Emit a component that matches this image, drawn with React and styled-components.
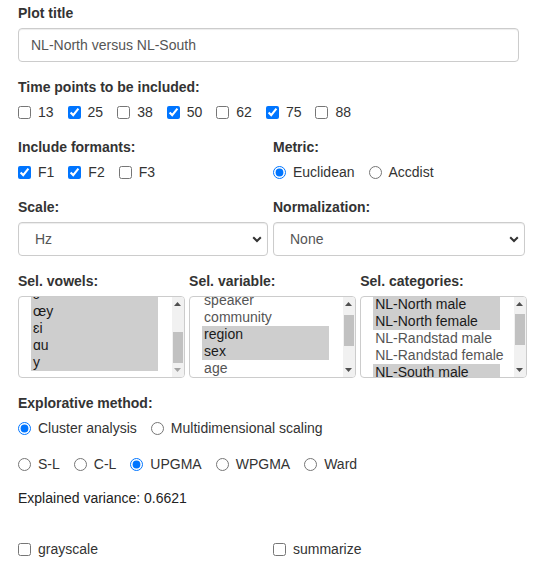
import React from "react";
import styled, { createGlobalStyle } from "styled-components";

const GlobalStyle = createGlobalStyle`
  body {
    margin: 0;
    background: #fff;
    font-family: "Liberation Sans", Arial, sans-serif;
    font-size: 14px;
    line-height: 20px;
    color: #333;
  }
`;

const Page = styled.div`
  width: 509px;
  padding: 3px 0 0 18px;
`;

const FormGroup = styled.div`
  margin-bottom: ${(p) => (p.$mb !== undefined ? p.$mb : 15)}px;
`;

const Label = styled.div`
  font-weight: bold;
  line-height: 20px;
  margin-bottom: 5px;
  white-space: nowrap;
`;

const TextInput = styled.input`
  box-sizing: border-box;
  width: 501px;
  height: 34px;
  padding: 6px 12px;
  border: 1px solid #ccc;
  border-radius: 4px;
  box-shadow: inset 0 1px 1px rgba(0, 0, 0, 0.075);
  font-family: inherit;
  font-size: 14px;
  color: #555;
  outline: none;
`;

const OptionRow = styled.div`
  display: flex;
  align-items: center;
  gap: 14px;
  height: 20px;
  margin-top: ${(p) => p.$mt || 0}px;
`;

const Option = styled.label`
  display: inline-flex;
  align-items: center;
  gap: 7px;
  font-weight: normal;
  color: #333;
  white-space: nowrap;
  cursor: pointer;
`;

const Control = styled.input`
  margin: 0;
  width: 13px;
  height: 13px;
`;

const Columns = styled.div`
  display: grid;
  grid-template-columns: ${(p) => p.$cols};
  column-gap: ${(p) => p.$gap}px;
`;

const SelectWrap = styled.div`
  position: relative;
`;

const Select = styled.select`
  appearance: none;
  box-sizing: border-box;
  width: 100%;
  height: 34px;
  padding: 0 30px 0 16px;
  border: 1px solid #ccc;
  border-radius: 4px;
  background: #fff;
  box-shadow: inset 0 1px 1px rgba(0, 0, 0, 0.075);
  font-family: inherit;
  font-size: 14px;
  color: #555;
  outline: none;
`;

const Chevron = styled.svg`
  position: absolute;
  right: 6px;
  top: 14px;
  pointer-events: none;
`;

const ListBox = styled.div`
  display: flex;
  height: 82px;
  box-sizing: border-box;
  border: 1px solid #ccc;
  border-radius: 4px;
  overflow: hidden;
  background: #fff;
`;

const ListItems = styled.div`
  flex: 1;
  min-width: 0;
  overflow: hidden;
  padding: 0 14px 0 12px;
`;

const ListInner = styled.div`
  margin-top: ${(p) => p.$offset}px;
`;

const ListOption = styled.div`
  height: 17px;
  box-sizing: border-box;
  padding: 0 2px 1px;
  line-height: 16px;
  white-space: nowrap;
  background: ${(p) => (p.$selected ? "#cecece" : "transparent")};
  color: ${(p) => (p.$selected ? "#1a1a1a" : "#555")};
`;

const Scrollbar = styled.div`
  width: 12px;
  flex: none;
  display: flex;
  flex-direction: column;
  background: #f1f1f1;
`;

const ScrollButton = styled.div`
  height: 14px;
  display: flex;
  align-items: center;
  justify-content: center;
`;

const Track = styled.div`
  flex: 1;
  position: relative;
`;

const Thumb = styled.div`
  position: absolute;
  left: 1px;
  right: 1px;
  top: ${(p) => p.$top}px;
  height: ${(p) => p.$h}px;
  background: #c1c1c1;
`;

const Plain = styled.div`
  line-height: 20px;
  color: #222;
`;

function Arrow({ up, dim }) {
  return (
    <svg width="7" height="4" viewBox="0 0 7 4">
      <path
        d={up ? "M0 4 L3.5 0 L7 4 Z" : "M0 0 L3.5 4 L7 0 Z"}
        fill={dim ? "#a3a3a3" : "#505050"}
      />
    </svg>
  );
}

function MultiList({ items, selected, offset, thumbTop, thumbH, downDim }) {
  return (
    <ListBox>
      <ListItems>
        <ListInner $offset={offset}>
          {items.map((it) => (
            <ListOption key={it} $selected={selected.includes(it)}>
              {it}
            </ListOption>
          ))}
        </ListInner>
      </ListItems>
      <Scrollbar>
        <ScrollButton>
          <Arrow up />
        </ScrollButton>
        <Track>
          <Thumb $top={thumbTop} $h={thumbH} />
        </Track>
        <ScrollButton>
          <Arrow dim={downDim} />
        </ScrollButton>
      </Scrollbar>
    </ListBox>
  );
}

function Dropdown({ value, options }) {
  return (
    <SelectWrap>
      <Select defaultValue={value}>
        {options.map((o) => (
          <option key={o}>{o}</option>
        ))}
      </Select>
      <Chevron width="10" height="7" viewBox="0 0 10 7">
        <path d="M1.2 1.2 L5 5 L8.8 1.2" fill="none" stroke="#333" strokeWidth="2" />
      </Chevron>
    </SelectWrap>
  );
}

const timePoints = [
  ["13", false],
  ["25", true],
  ["38", false],
  ["50", true],
  ["62", false],
  ["75", true],
  ["88", false],
];

const twoCols = "250px 252px";
const threeCols = "166.5px 166.5px 166.5px";

export default function App() {
  return (
    <>
      <GlobalStyle />
      <Page>
        <FormGroup>
          <Label>Plot title</Label>
          <TextInput defaultValue="NL-North versus NL-South" />
        </FormGroup>

        <FormGroup>
          <Label>Time points to be included:</Label>
          <OptionRow>
            {timePoints.map(([t, on]) => (
              <Option key={t}>
                <Control type="checkbox" defaultChecked={on} />
                {t}
              </Option>
            ))}
          </OptionRow>
        </FormGroup>

        <FormGroup>
          <Columns $cols={twoCols} $gap={5}>
            <div>
              <Label>Include formants:</Label>
              <OptionRow>
                <Option>
                  <Control type="checkbox" defaultChecked />
                  F1
                </Option>
                <Option>
                  <Control type="checkbox" defaultChecked />
                  F2
                </Option>
                <Option>
                  <Control type="checkbox" />
                  F3
                </Option>
              </OptionRow>
            </div>
            <div>
              <Label>Metric:</Label>
              <OptionRow>
                <Option>
                  <Control type="radio" name="metric" defaultChecked />
                  Euclidean
                </Option>
                <Option>
                  <Control type="radio" name="metric" />
                  Accdist
                </Option>
              </OptionRow>
            </div>
          </Columns>
        </FormGroup>

        <FormGroup>
          <Columns $cols={twoCols} $gap={5}>
            <div>
              <Label>Scale:</Label>
              <Dropdown value="Hz" options={["Hz", "Bark", "ERB", "ln", "mel", "ST"]} />
            </div>
            <div>
              <Label>Normalization:</Label>
              <Dropdown value="None" options={["None", "Lobanov", "Nearey", "Watt & Fabricius"]} />
            </div>
          </Columns>
        </FormGroup>

        <FormGroup>
          <Columns $cols={threeCols} $gap={4.6}>
            <div>
              <Label>Sel. vowels:</Label>
              <MultiList
                items={["ɛ", "œy", "ɛi", "ɑu", "y"]}
                selected={["ɛ", "œy", "ɛi", "ɑu", "y"]}
                offset={-11}
                thumbTop={21}
                thumbH={31}
                downDim
              />
            </div>
            <div>
              <Label>Sel. variable:</Label>
              <MultiList
                items={["vowel", "speaker", "community", "region", "sex", "age", "education"]}
                selected={["region", "sex"]}
                offset={-22}
                thumbTop={4}
                thumbH={31}
              />
            </div>
            <div>
              <Label>Sel. categories:</Label>
              <MultiList
                items={[
                  "NL-North male",
                  "NL-North female",
                  "NL-Randstad male",
                  "NL-Randstad female",
                  "NL-South male",
                  "NL-South female",
                ]}
                selected={["NL-North male", "NL-North female", "NL-South male", "NL-South female"]}
                offset={-1}
                thumbTop={3}
                thumbH={31}
              />
            </div>
          </Columns>
        </FormGroup>

        <FormGroup $mb={14}>
          <Label>Explorative method:</Label>
          <OptionRow>
            <Option>
              <Control type="radio" name="method" defaultChecked />
              Cluster analysis
            </Option>
            <Option>
              <Control type="radio" name="method" />
              Multidimensional scaling
            </Option>
          </OptionRow>
          <OptionRow $mt={16}>
            {["S-L", "C-L", "UPGMA", "WPGMA", "Ward"].map((m) => (
              <Option key={m}>
                <Control type="radio" name="cluster" defaultChecked={m === "UPGMA"} />
                {m}
              </Option>
            ))}
          </OptionRow>
        </FormGroup>

        <FormGroup $mb={31}>
          <Plain>Explained variance: 0.6621</Plain>
        </FormGroup>

        <Columns $cols={twoCols} $gap={5}>
          <OptionRow>
            <Option>
              <Control type="checkbox" />
              grayscale
            </Option>
          </OptionRow>
          <OptionRow>
            <Option>
              <Control type="checkbox" />
              summarize
            </Option>
          </OptionRow>
        </Columns>
      </Page>
    </>
  );
}
